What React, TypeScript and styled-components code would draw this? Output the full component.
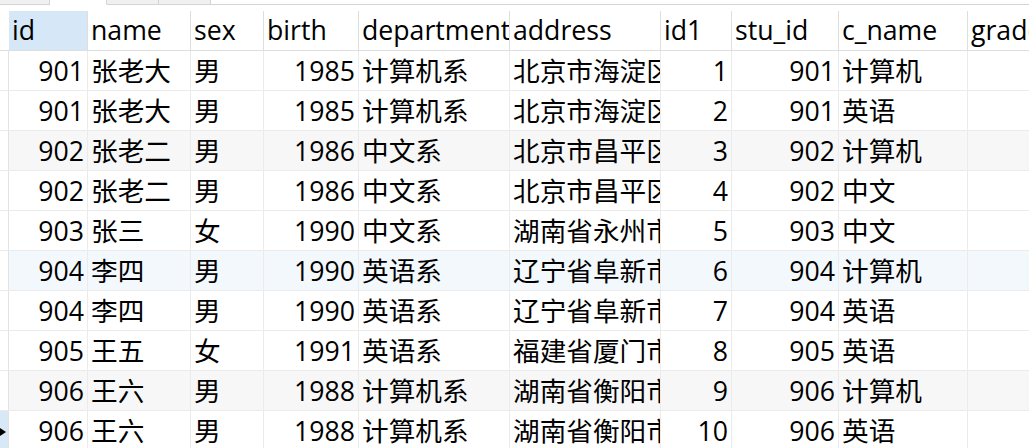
import React from "react";
import styled, { createGlobalStyle } from "styled-components";

const GlobalStyle = createGlobalStyle`
  html, body {
    margin: 0;
    padding: 0;
    background: #ffffff;
    overflow: hidden;
  }
  body {
    font-family: "Open Sans", "Noto Sans CJK SC", sans-serif;
  }
`;

const COLS = "9px 79px 103px 73px 95px 151px 151px 71px 107px 129px 120px";

const Page = styled.div`
  width: 1029px;
  height: 448px;
  overflow: hidden;
  display: flex;
  flex-direction: column;
  background: #ffffff;
`;

const TabStrip = styled.div`
  display: flex;
  height: 5px;
  flex: none;
`;

const Tab = styled.div<{ $w: number; $active?: boolean }>`
  width: ${(p) => p.$w}px;
  flex: none;
  box-sizing: border-box;
  background: ${(p) => (p.$active ? "#ffffff" : "#f0f0f0")};
  border-right: 1px solid #d4d4d4;
  border-bottom: ${(p) => (p.$active ? "1px solid transparent" : "1px solid #d4d4d4")};
`;

const TabFill = styled.div`
  flex: 1;
  box-sizing: border-box;
  border-bottom: 1px solid #d4d4d4;
`;

const Grid = styled.div`
  margin-top: 6px;
  display: flex;
  flex-direction: column;
  width: 1088px;
`;

const Row = styled.div<{ $bg?: string }>`
  display: grid;
  grid-template-columns: ${COLS};
  height: 40px;
  background: ${(p) => p.$bg || "#ffffff"};
`;

const HeaderCell = styled.div<{ $active?: boolean }>`
  box-sizing: border-box;
  height: 40px;
  padding: 0 3px;
  border-right: 1px solid #dedede;
  border-bottom: 1px solid #dedede;
  background: ${(p) => (p.$active ? "#d6e7f7" : "transparent")};
  font-size: 26.67px;
  line-height: 37px;
  color: #000000;
  white-space: nowrap;
  overflow: hidden;
  text-overflow: clip;
`;

const HeaderCorner = styled.div`
  box-sizing: border-box;
  height: 40px;
  border-bottom: 1px solid #dedede;
  background: #ffffff;
`;

const Indicator = styled.div<{ $selected?: boolean }>`
  box-sizing: border-box;
  height: 40px;
  border-right: 1px solid #e3e3e3;
  border-bottom: 1px solid #ebebeb;
  background: ${(p) => (p.$selected ? "#d9e8f7" : "#ffffff")};
  display: flex;
  align-items: center;
  position: relative;
`;

const Arrow = styled.div`
  width: 0;
  height: 0;
  margin-top: 2px;
  border-top: 4px solid transparent;
  border-bottom: 4px solid transparent;
  border-left: 6px solid #000000;
`;

const Cell = styled.div<{ $right?: boolean }>`
  box-sizing: border-box;
  height: 40px;
  padding: 1px 3px 0 3px;
  border-right: 1px solid #ebebeb;
  border-bottom: 1px solid #ebebeb;
  text-align: ${(p) => (p.$right ? "right" : "left")};
  font-size: 26.67px;
  line-height: 38px;
  color: #000000;
  white-space: nowrap;
  overflow: hidden;
  text-overflow: clip;
`;

type Rec = [number, string, string, number, string, string, number, number, string];

const data: Rec[] = [
  [901, "张老大", "男", 1985, "计算机系", "北京市海淀区", 1, 901, "计算机"],
  [901, "张老大", "男", 1985, "计算机系", "北京市海淀区", 2, 901, "英语"],
  [902, "张老二", "男", 1986, "中文系", "北京市昌平区", 3, 902, "计算机"],
  [902, "张老二", "男", 1986, "中文系", "北京市昌平区", 4, 902, "中文"],
  [903, "张三", "女", 1990, "中文系", "湖南省永州市", 5, 903, "中文"],
  [904, "李四", "男", 1990, "英语系", "辽宁省阜新市", 6, 904, "计算机"],
  [904, "李四", "男", 1990, "英语系", "辽宁省阜新市", 7, 904, "英语"],
  [905, "王五", "女", 1991, "英语系", "福建省厦门市", 8, 905, "英语"],
  [906, "王六", "男", 1988, "计算机系", "湖南省衡阳市", 9, 906, "计算机"],
  [906, "王六", "男", 1988, "计算机系", "湖南省衡阳市", 10, 906, "英语"],
];

const headers = ["id", "name", "sex", "birth", "department", "address", "id1", "stu_id", "c_name", "grade"];

const rowBg = (i: number) => {
  if (i === 5) return "#f3f8fd";
  if (i === 2 || i === 8) return "#f7f7f7";
  return "#ffffff";
};

export default function App() {
  return (
    <Page>
      <GlobalStyle />
      <TabStrip>
        <Tab $w={50} />
        <Tab $w={57} $active />
        <Tab $w={52} />
        <Tab $w={52} />
        <TabFill />
      </TabStrip>
      <Grid>
        <Row>
          <HeaderCorner />
          {headers.map((h, i) => (
            <HeaderCell key={h} $active={i === 0}>
              {h}
            </HeaderCell>
          ))}
        </Row>
        {data.map((r, i) => (
          <Row key={i} $bg={rowBg(i)}>
            <Indicator $selected={i === 9}>{i === 9 && <Arrow />}</Indicator>
            <Cell $right>{r[0]}</Cell>
            <Cell>{r[1]}</Cell>
            <Cell>{r[2]}</Cell>
            <Cell $right>{r[3]}</Cell>
            <Cell>{r[4]}</Cell>
            <Cell>{r[5]}</Cell>
            <Cell $right>{r[6]}</Cell>
            <Cell $right>{r[7]}</Cell>
            <Cell>{r[8]}</Cell>
            <Cell $right></Cell>
          </Row>
        ))}
      </Grid>
    </Page>
  );
}
